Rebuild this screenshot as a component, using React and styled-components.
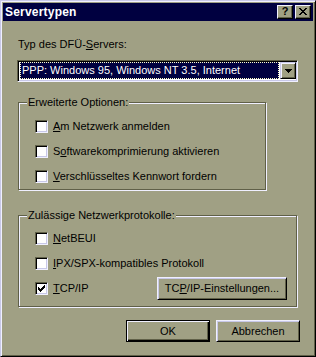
import React from 'react';
import styled, { createGlobalStyle } from 'styled-components';

const C = {
  face: '#a0a084',
  hi: '#f0f0ff',
  light: '#c8c8e8',
  shadow: '#606048',
  dark: '#000000',
  title: '#000040',
  sel: '#000040',
};

const Global = createGlobalStyle`
  html, body { margin: 0; padding: 0; background: ${C.face}; }
  body {
    font-family: "Liberation Sans", Arial, sans-serif;
    font-size: 11px;
    color: #000;
  }
  * { box-sizing: border-box; }
`;

const Window = styled.div`
  width: 316px;
  height: 357px;
  background: ${C.face};
  border: 1px solid;
  border-color: ${C.light} ${C.dark} ${C.dark} ${C.light};
  box-shadow: inset 1px 1px 0 ${C.hi}, inset -1px -1px 0 ${C.shadow};
  padding: 2px;
  display: flex;
  flex-direction: column;
`;

const TitleBar = styled.div`
  height: 18px;
  background: ${C.title};
  display: flex;
  align-items: center;
  padding: 0 2px 0 2px;
  gap: 2px;
`;

const TitleText = styled.div`
  flex: 1;
  color: #fff;
  font-weight: bold;
  font-size: 12px;
  line-height: 14px;
  letter-spacing: 0.2px;
`;

const CaptionButton = styled.div`
  width: 16px;
  height: 14px;
  background: ${C.face};
  border: 1px solid;
  border-color: ${C.hi} ${C.dark} ${C.dark} ${C.hi};
  box-shadow: inset -1px -1px 0 ${C.shadow};
  display: flex;
  align-items: center;
  justify-content: center;
  font-weight: bold;
  font-size: 11px;
  line-height: 11px;
  padding-bottom: 1px;
`;

const Body = styled.div`
  flex: 1;
  padding: 17px 15px 0 14px;
  display: flex;
  flex-direction: column;
`;

const Label = styled.div`
  height: 13px;
  line-height: 13px;
  padding-left: 1px;
`;

const Combo = styled.div`
  margin-top: 9px;
  width: 281px;
  height: 22px;
  background: #fff;
  border: 1px solid;
  border-color: ${C.shadow} ${C.hi} ${C.hi} ${C.shadow};
  box-shadow: inset 1px 1px 0 ${C.dark}, inset -1px -1px 0 ${C.light};
  padding: 1px 1px 2px 2px;
  display: flex;
  align-items: stretch;
`;

const Selection = styled.div`
  flex: 1;
  margin-right: 1px;
  background: ${C.sel};
  color: #fff;
  border: 1px dotted #ffffc8;
  line-height: 15px;
  padding-left: 1px;
  white-space: nowrap;
  overflow: hidden;
`;

const DropButton = styled.div`
  width: 16px;
  background: ${C.face};
  border: 1px solid;
  border-color: ${C.light} ${C.dark} ${C.dark} ${C.light};
  box-shadow: inset 1px 1px 0 ${C.hi}, inset -1px -1px 0 ${C.shadow};
  display: flex;
  align-items: center;
  justify-content: center;
`;

const Group = styled.div`
  margin-top: ${(p) => p.$mt}px;
  margin-left: 1px;
  width: ${(p) => p.$w}px;
  height: ${(p) => p.$h}px;
  border: 1px solid ${C.shadow};
  box-shadow: inset 1px 1px 0 ${C.hi}, 1px 1px 0 ${C.hi};
  padding: 0 ${(p) => p.$pr || 0}px 0 16px;
  display: flex;
  flex-direction: column;
  gap: 2px;
`;

const Legend = styled.div`
  margin: -7px 0 ${(p) => p.$mb}px -8px;
  padding: 0 1px;
  width: max-content;
  background: ${C.face};
  line-height: 13px;
  height: 13px;
`;

const Row = styled.div`
  height: 23px;
  display: flex;
  align-items: center;
  gap: 5px;
`;

const Box = styled.div`
  width: 13px;
  height: 13px;
  flex: none;
  background: #fff;
  border: 1px solid;
  border-color: ${C.shadow} ${C.hi} ${C.hi} ${C.shadow};
  box-shadow: inset 1px 1px 0 ${C.dark}, inset -1px -1px 0 ${C.light};
  display: flex;
  align-items: center;
  justify-content: center;
`;

const RowText = styled.span`
  line-height: 13px;
  white-space: nowrap;
`;

const Button = styled.div`
  width: ${(p) => p.$w}px;
  height: ${(p) => p.$h}px;
  background: ${C.face};
  border: 1px solid;
  border-color: ${(p) => (p.$default ? `${C.dark}` : `${C.hi} ${C.dark} ${C.dark} ${C.hi}`)};
  box-shadow: ${(p) =>
    p.$default
      ? `inset 1px 1px 0 ${C.hi}, inset -1px -1px 0 ${C.dark}, inset -2px -2px 0 ${C.shadow}`
      : `inset 1px 1px 0 ${C.light}, inset -1px -1px 0 ${C.shadow}`};
  display: flex;
  align-items: center;
  justify-content: center;
  line-height: 13px;
  white-space: nowrap;
  margin-left: ${(p) => (p.$auto ? 'auto' : '0')};
`;

const Footer = styled.div`
  margin-top: 13px;
  margin-right: -2px;
  display: flex;
  justify-content: flex-end;
  gap: 6px;
`;

const Check = () => (
  <svg width="7" height="7" viewBox="0 0 7 7" shapeRendering="crispEdges">
    <rect x="6" y="0" width="1" height="1" />
    <rect x="5" y="1" width="2" height="1" />
    <rect x="0" y="2" width="1" height="1" />
    <rect x="4" y="2" width="3" height="1" />
    <rect x="0" y="3" width="2" height="1" />
    <rect x="3" y="3" width="3" height="1" />
    <rect x="0" y="4" width="5" height="1" />
    <rect x="1" y="5" width="3" height="1" />
    <rect x="2" y="6" width="1" height="1" />
  </svg>
);

const Arrow = () => (
  <svg width="7" height="4" viewBox="0 0 7 4" shapeRendering="crispEdges">
    <rect x="0" y="0" width="7" height="1" />
    <rect x="1" y="1" width="5" height="1" />
    <rect x="2" y="2" width="3" height="1" />
    <rect x="3" y="3" width="1" height="1" />
  </svg>
);

const CloseX = () => (
  <svg width="8" height="7" viewBox="0 0 8 7" shapeRendering="crispEdges">
    <rect x="0" y="0" width="2" height="1" />
    <rect x="6" y="0" width="2" height="1" />
    <rect x="1" y="1" width="2" height="1" />
    <rect x="5" y="1" width="2" height="1" />
    <rect x="2" y="2" width="4" height="1" />
    <rect x="3" y="3" width="2" height="1" />
    <rect x="2" y="4" width="4" height="1" />
    <rect x="1" y="5" width="2" height="1" />
    <rect x="5" y="5" width="2" height="1" />
    <rect x="0" y="6" width="2" height="1" />
    <rect x="6" y="6" width="2" height="1" />
  </svg>
);

const CheckRow = ({ checked, children, extra }) => (
  <Row>
    <Box>{checked && <Check />}</Box>
    <RowText>{children}</RowText>
    {extra}
  </Row>
);

export default function App() {
  return (
    <>
      <Global />
      <Window>
        <TitleBar>
          <TitleText>Servertypen</TitleText>
          <CaptionButton>?</CaptionButton>
          <CaptionButton>
            <CloseX />
          </CaptionButton>
        </TitleBar>
        <Body>
          <Label>
            Typ des DFÜ-<u>S</u>ervers:
          </Label>
          <Combo>
            <Selection>PPP: Windows 95, Windows NT 3.5, Internet</Selection>
            <DropButton>
              <Arrow />
            </DropButton>
          </Combo>
          <Group $mt={20} $w={248} $h={88}>
            <Legend $mb={4}>Erweiterte Optionen:</Legend>
            <CheckRow>
              <u>A</u>m Netzwerk anmelden
            </CheckRow>
            <CheckRow>
              S<u>o</u>ftwarekomprimierung aktivieren
            </CheckRow>
            <CheckRow>
              <u>V</u>erschlüsseltes Kennwort fordern
            </CheckRow>
          </Group>
          <Group $mt={25} $w={279} $h={92} $pr={9}>
            <Legend $mb={3}>Zulässige Netzwerkprotokolle:</Legend>
            <CheckRow>
              <u>N</u>etBEUI
            </CheckRow>
            <CheckRow>
              <u>I</u>PX/SPX-kompatibles Protokoll
            </CheckRow>
            <CheckRow
              checked
              extra={
                <Button $w={130} $h={23} $auto>
                  TC<u>P</u>/IP-Einstellungen...
                </Button>
              }
            >
              <u>T</u>CP/IP
            </CheckRow>
          </Group>
          <Footer>
            <Button $w={84} $h={22} $default>
              OK
            </Button>
            <Button $w={84} $h={22}>
              Abbrechen
            </Button>
          </Footer>
        </Body>
      </Window>
    </>
  );
}
